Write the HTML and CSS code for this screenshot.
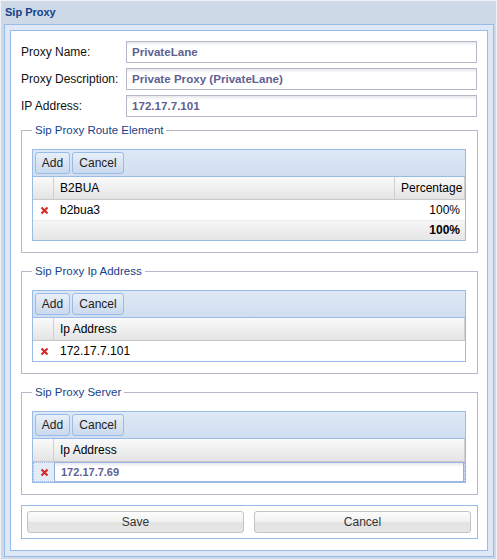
FILE: index.html
```html
<!DOCTYPE html>
<html>
<head>
<meta charset="utf-8">
<title>Sip Proxy</title>
<link rel="stylesheet" href="styles.css">
</head>
<body>
<div class="window">
  <div class="win-header">Sip Proxy</div>
  <div class="win-frame">
    <div class="panel">
      <div class="form-row"><div class="form-label">Proxy Name:</div><div class="field">PrivateLane</div></div>
      <div class="form-row"><div class="form-label">Proxy Description:</div><div class="field">Private Proxy (PrivateLane)</div></div>
      <div class="form-row"><div class="form-label">IP Address:</div><div class="field">172.17.7.101</div></div>

      <fieldset class="fs fs-first">
        <legend class="fs-legend">Sip Proxy Route Element</legend>
        <div class="grid">
          <div class="tbar"><button class="tbtn tbtn-add">Add</button><button class="tbtn tbtn-cancel">Cancel</button></div>
          <div class="ghead">
            <div class="hcell c-chk"></div>
            <div class="hcell c-main3">B2BUA</div>
            <div class="hcell c-pct">Percentage</div>
          </div>
          <div class="grow">
            <div class="cell c-chk"><svg class="xicon" width="9" height="9" viewBox="0 0 9 9"><path d="M1.5 1.5 L7.5 7.5 M7.5 1.5 L1.5 7.5" stroke="#d62828" stroke-width="2.1" fill="none"/></svg></div>
            <div class="cell c-main3">b2bua3</div>
            <div class="cell c-pct num">100%</div>
          </div>
          <div class="gsum">
            <div class="cell c-chk"></div>
            <div class="cell c-main3"></div>
            <div class="cell c-pct num bold">100%</div>
          </div>
        </div>
      </fieldset>

      <fieldset class="fs">
        <legend class="fs-legend">Sip Proxy Ip Address</legend>
        <div class="grid">
          <div class="tbar"><button class="tbtn tbtn-add">Add</button><button class="tbtn tbtn-cancel">Cancel</button></div>
          <div class="ghead">
            <div class="hcell c-chk"></div>
            <div class="hcell c-main2">Ip Address</div>
          </div>
          <div class="grow">
            <div class="cell c-chk"><svg class="xicon" width="9" height="9" viewBox="0 0 9 9"><path d="M1.5 1.5 L7.5 7.5 M7.5 1.5 L1.5 7.5" stroke="#d62828" stroke-width="2.1" fill="none"/></svg></div>
            <div class="cell c-main2">172.17.7.101</div>
          </div>
        </div>
      </fieldset>

      <fieldset class="fs">
        <legend class="fs-legend">Sip Proxy Server</legend>
        <div class="grid">
          <div class="tbar"><button class="tbtn tbtn-add">Add</button><button class="tbtn tbtn-cancel">Cancel</button></div>
          <div class="ghead">
            <div class="hcell c-chk"></div>
            <div class="hcell c-main2">Ip Address</div>
          </div>
          <div class="grow grow-edit">
            <div class="cell c-chk c-sel"><svg class="xicon" width="9" height="9" viewBox="0 0 9 9"><path d="M1.5 1.5 L7.5 7.5 M7.5 1.5 L1.5 7.5" stroke="#d62828" stroke-width="2.1" fill="none"/></svg></div>
            <div class="editor">172.17.7.69</div>
          </div>
        </div>
      </fieldset>

      <div class="btn-panel">
        <button class="btn">Save</button>
        <button class="btn">Cancel</button>
      </div>
    </div>
  </div>
</div>
</body>
</html>
```

FILE: styles.css
```css
* { box-sizing: border-box; }

body {
  margin: 0;
  background: #eef2f6;
  font-family: "Liberation Sans", Arial, sans-serif;
  font-size: 12px;
  color: #000;
}

.window {
  margin: 1px 0 0 1px;
  width: 495px;
  background: #cdd9e6;
  padding: 0 2px 2px 3px;
}

.win-header {
  height: 23px;
  padding: 4px 0 0 1px;
  font-size: 11px;
  line-height: 14px;
  font-weight: bold;
  color: #15428b;
}

.win-frame {
  border: 1px solid #99bbe8;
  background: #dfe8f6;
  padding: 5px;
}

.panel {
  border: 1px solid #99bbe8;
  background: #fff;
  padding: 10px 9px 11px 10px;
}

.form-row {
  display: flex;
  align-items: center;
  height: 22px;
  margin-bottom: 5px;
}
.form-row:nth-child(3) { margin-bottom: 0; }

.form-label {
  width: 105px;
  line-height: 22px;
  color: #111;
  white-space: nowrap;
}

.field {
  width: 351px;
  height: 22px;
  border: 1px solid #b5b8c8;
  background: linear-gradient(#e6e8ee 0, #ffffff 4px);
  padding: 0 5px;
  line-height: 20px;
  font-size: 11.6px;
  font-weight: bold;
  color: #5f5f92;
  white-space: nowrap;
}

.fs {
  margin: 11px 0 0 0;
  min-width: 0;
  border: 1px solid #b5b8c8;
  padding: 12px 11px 11px 10px;
}
.fs-first { margin-top: 6px; }

.fs-legend {
  padding: 0 3px;
  font-size: 11.5px;
  line-height: 14px;
  color: #15428b;
}

.grid {
  border: 1px solid #99bbe8;
  background: #fff;
}

.tbar {
  display: flex;
  gap: 2px;
  padding: 2px;
  border-bottom: 1px solid #99bbe8;
  background: linear-gradient(#dfe9f5, #d0def0);
}

.tbtn {
  height: 22px;
  padding: 0;
  border: 1px solid #99bbe8;
  border-radius: 3px;
  background: linear-gradient(#e8eff8, #cad9ee);
  font-family: "Liberation Sans", Arial, sans-serif;
  font-size: 12px;
  color: #222;
  text-align: center;
}
.tbtn-add { width: 35px; }
.tbtn-cancel { width: 52px; }

.ghead {
  display: flex;
  height: 23px;
  border-bottom: 1px solid #c8c8c8;
  background: linear-gradient(#fafafa, #e4e4e4);
}

.hcell {
  border-right: 1px solid #d0d0d0;
  line-height: 22px;
  padding-left: 6px;
  white-space: nowrap;
  overflow: hidden;
}

.c-chk { width: 21px; flex: none; }
.c-main3 { width: 341px; flex: none; }
.c-main2 { width: 411px; flex: none; }
.c-pct { width: 70px; flex: none; }

.grow {
  display: flex;
  height: 20px;
}

.cell {
  line-height: 20px;
  padding-left: 6px;
  white-space: nowrap;
  overflow: hidden;
}
.cell.c-chk {
  display: flex;
  align-items: center;
  padding-left: 7px;
}
.cell.num {
  text-align: right;
  padding-right: 5px;
}
.bold { font-weight: bold; }

.gsum {
  display: flex;
  height: 20px;
  border-top: 1px solid #ededed;
  background: linear-gradient(#f5f5f5, #e6e6e6);
}
.gsum .cell { line-height: 18px; }

.xicon { display: block; }

.grow-edit {
  outline: 1px dotted #a3bae9;
  outline-offset: -1px;
  background: #dfe8f6;
}

.c-sel { background: #e3ebf7; }

.editor {
  width: 410px;
  height: 20px;
  border: 1px solid #8fb1dc;
  background: linear-gradient(#e6e8ee 0, #ffffff 4px);
  padding-left: 6px;
  line-height: 18px;
  font-size: 11px;
  font-weight: bold;
  color: #5f5f92;
}

.btn-panel {
  display: flex;
  gap: 10px;
  margin-top: 10px;
  border: 1px solid #99bbe8;
  padding: 5px 6px 5px 5px;
}

.btn {
  flex: 1;
  height: 22px;
  padding: 0;
  border: 1px solid #c4c4c4;
  border-radius: 3px;
  background: linear-gradient(#fcfcfc 0, #f1f1f1 48%, #e3e3e3 52%, #e6e6e6 100%);
  font-family: "Liberation Sans", Arial, sans-serif;
  font-size: 12px;
  color: #333;
}
```
